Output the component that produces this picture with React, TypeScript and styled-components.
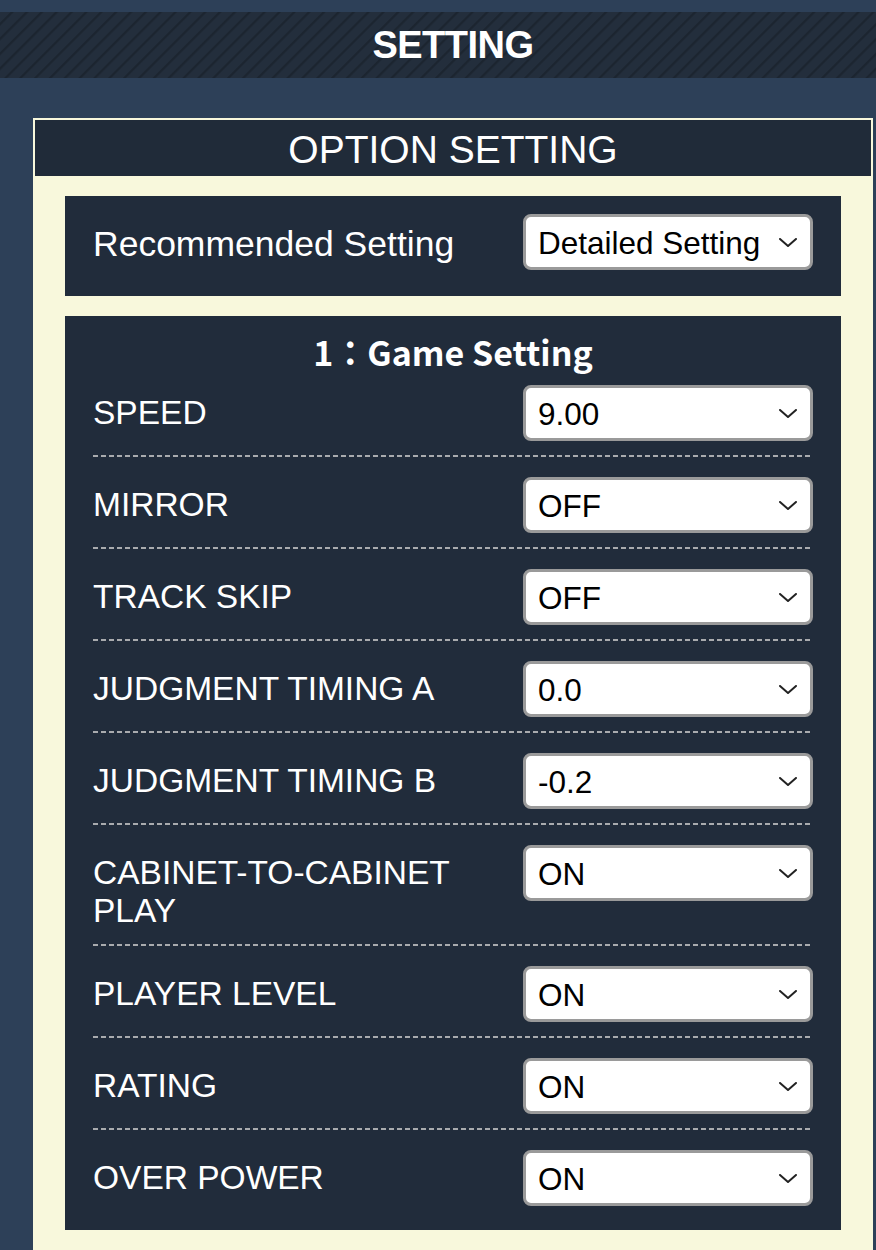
import React from 'react'
import styled, { createGlobalStyle } from 'styled-components'

interface OptionRow {
    label: string;
    value: string;
    options: string[];
}

const rows: OptionRow[] = [
    { label: 'SPEED', value: '9.00', options: ['8.00', '8.50', '9.00', '9.50', '10.00'] },
    { label: 'MIRROR', value: 'OFF', options: ['OFF', 'ON'] },
    { label: 'TRACK SKIP', value: 'OFF', options: ['OFF', 'ON'] },
    { label: 'JUDGMENT TIMING A', value: '0.0', options: ['-0.2', '-0.1', '0.0', '0.1', '0.2'] },
    { label: 'JUDGMENT TIMING B', value: '-0.2', options: ['-0.2', '-0.1', '0.0', '0.1', '0.2'] },
    { label: 'CABINET-TO-CABINET PLAY', value: 'ON', options: ['OFF', 'ON'] },
    { label: 'PLAYER LEVEL', value: 'ON', options: ['OFF', 'ON'] },
    { label: 'RATING', value: 'ON', options: ['OFF', 'ON'] },
    { label: 'OVER POWER', value: 'ON', options: ['OFF', 'ON'] },
];

const Chevron = () => (
    <ChevronIcon width="18" height="9" viewBox="0 0 18 9">
        <polyline points="1,1 9,8 17,1" fill="none" stroke="#222" strokeWidth="2" strokeLinecap="round" strokeLinejoin="round" />
    </ChevronIcon>
);

const Dropdown = ({ value, options }: { value: string; options: string[] }) => (
    <SelectWrap>
        <CustomSelect defaultValue={value}>
            {options.map((o) => (
                <option key={o} value={o}>{o}</option>
            ))}
        </CustomSelect>
        <Chevron />
    </SelectWrap>
);

const App = () => {
    return (
        <Page>
            <GlobalStyle />
            <HeaderBar>
                <HeaderTitle>SETTING</HeaderTitle>
            </HeaderBar>
            <OptionBox>
                <BoxTitle>OPTION SETTING</BoxTitle>
                <Panel>
                    <PresetRow>
                        <PresetLabel>Recommended Setting</PresetLabel>
                        <Dropdown value="Detailed Setting" options={['Detailed Setting', 'Beginner', 'Standard']} />
                    </PresetRow>
                </Panel>
                <Panel>
                    <PanelTitle>1：Game Setting</PanelTitle>
                    {rows.map((row, index) => (
                        <Row key={row.label} last={index === rows.length - 1}>
                            <RowLabel>{row.label === 'CABINET-TO-CABINET PLAY' ? <>CABINET-TO-CABINET<br />PLAY</> : row.label}</RowLabel>
                            <Dropdown value={row.value} options={row.options} />
                        </Row>
                    ))}
                </Panel>
            </OptionBox>
        </Page>
    )
}

export default App


const GlobalStyle = createGlobalStyle`
    html, body {
        margin: 0;
        padding: 0;
        background-color: #2d4058;
        font-family: "Liberation Sans", Arial, sans-serif;
    }
`;

const Page = styled.div`
    padding-top: 12px;
    display: flex;
    flex-direction: column;
`;

const HeaderBar = styled.div`
    height: 66px;
    padding-left: 30px;
    display: flex;
    align-items: center;
    justify-content: center;
    background-color: #232e3c;
    background-image: repeating-linear-gradient(
        135deg,
        #232e3c 0px,
        #232e3c 7px,
        #1c2530 8px,
        #1c2530 9px,
        #232e3c 10.5px
    );
`;

const HeaderTitle = styled.h1`
    margin: 0;
    color: #ffffff;
    font-size: 38px;
    font-weight: bold;
    letter-spacing: -0.5px;
`;

const OptionBox = styled.div`
    margin: 40px 3px 0 33px;
    padding: 2px 2px 40px;
    background-color: #f8f8dc;
    display: flex;
    flex-direction: column;
    gap: 20px;
`;

const BoxTitle = styled.h2`
    margin: 0;
    height: 56px;
    display: flex;
    align-items: center;
    justify-content: center;
    padding-top: 4px;
    box-sizing: border-box;
    background-color: #202b39;
    color: #ffffff;
    font-size: 39px;
    font-weight: normal;
`;

const Panel = styled.div`
    margin: 0 30px;
    padding: 0 28px 8px;
    background-color: #212c3b;
    display: flex;
    flex-direction: column;
`;

const PresetRow = styled.div`
    height: 92px;
    display: flex;
    align-items: center;
    justify-content: space-between;
`;

const PresetLabel = styled.span`
    color: #ffffff;
    font-size: 35.5px;
    padding-top: 4px;
`;

const PanelTitle = styled.div`
    padding-top: 20px;
    line-height: 32px;
    text-align: center;
    color: #ffffff;
    font-size: 34px;
    font-weight: bold;
    font-family: "Noto Sans CJK JP", "Liberation Sans", sans-serif;
    margin-bottom: -3px;
`;

const Row = styled.div<{ last?: boolean }>`
    display: flex;
    align-items: flex-start;
    justify-content: space-between;
    padding: 20px 0 16px;
    background-image: ${(p) => (p.last ? 'none' : 'linear-gradient(to right, #a9abae 5px, transparent 5px)')};
    background-size: 8px 2px;
    background-repeat: repeat-x;
    background-position: left bottom;
`;

const RowLabel = styled.span`
    padding-top: 9px;
    color: #ffffff;
    font-size: 33.5px;
    line-height: 38px;
`;

const SelectWrap = styled.div`
    position: relative;
    flex-shrink: 0;
    width: 290px;
    height: 56px;
`;

const CustomSelect = styled.select`
    appearance: none;
    -webkit-appearance: none;
    width: 100%;
    height: 100%;
    box-sizing: border-box;
    padding: 2px 40px 0 12px;
    border: 3px solid #9a9a9a;
    border-radius: 8px;
    background-color: #ffffff;
    color: #000000;
    font-family: "Liberation Sans", Arial, sans-serif;
    font-size: 31.5px;
    outline: none;
`;

const ChevronIcon = styled.svg`
    position: absolute;
    right: 16px;
    top: 50%;
    margin-top: -4px;
    pointer-events: none;
`;
